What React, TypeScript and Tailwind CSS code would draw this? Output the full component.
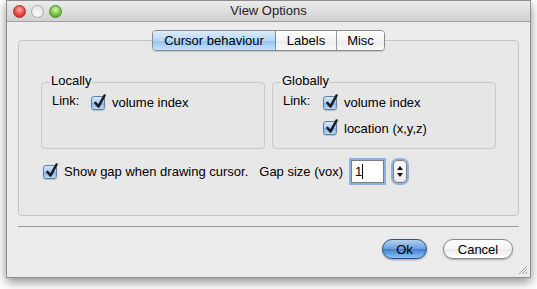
import React from 'react';

const Check: React.FC<{ label: string }> = ({ label }) => {
  return (
    <div className="flex items-center gap-[7px]">
      <div className="relative w-[14px] h-[14px] rounded-[3px] border border-[#5f7fa6] bg-[linear-gradient(#d3e6fa,#a9cbf0_50%,#7fb1e6_51%,#b8dafa)] shadow-[0_1px_1px_rgba(0,0,0,0.2)]">
        <svg className="absolute -top-[3px] left-[1px]" width="13" height="15" viewBox="0 0 13 15">
          <path d="M2.5 9 L5.5 12.5 L11.5 1.5" fill="none" stroke="#1c1c1c" strokeWidth="2.6" strokeLinecap="round" strokeLinejoin="round" />
        </svg>
      </div>
      <span>{label}</span>
    </div>
  );
};

const Group: React.FC<{ title: string; children: React.ReactNode }> = ({ title, children }) => {
  return (
    <div className="relative h-[67px] rounded-[4px] border border-[#c9c9c9] bg-[#e6e6e6] pl-[10px] pt-[10px]">
      <span className="absolute -top-[10px] left-[8px] px-[1px] bg-[#e8e8e8] leading-[16px]">{title}</span>
      {children}
    </div>
  );
};

const App: React.FC = () => {
  return (
    <div className="w-[537px] h-[289px] bg-white pl-[6px] font-['Liberation_Sans',Arial,sans-serif] text-[13px] text-black">
      <div className="relative w-[525px] h-[278px] flex flex-col border border-[#8d8d8d] bg-[#ececec] shadow-[0_4px_10px_rgba(0,0,0,0.45)]">
        {/* title bar */}
        <div className="relative h-[21px] flex items-center pl-[6px] gap-[5px] border-b border-[#a3a3a3] bg-[linear-gradient(#ececec,#d1d1d1)]">
          <div className="w-[13px] h-[13px] rounded-full border border-[#a8302a] bg-[radial-gradient(circle_at_50%_35%,#ffb3ad,#e8453c_55%,#b9221a)]" />
          <div className="w-[13px] h-[13px] rounded-full border border-[#a9a9a9] bg-[radial-gradient(circle_at_50%_70%,#fafafa,#e0e0e0)]" />
          <div className="w-[13px] h-[13px] rounded-full border border-[#4f8c2b] bg-[radial-gradient(circle_at_50%_35%,#d9f5b4,#78c43f_55%,#3f8a1c)]" />
          <div className="absolute inset-0 flex items-center justify-center text-[#222]">View Options</div>
        </div>

        <div className="flex flex-col px-[11px] pt-[8px]">
          {/* tabs */}
          <div className="relative z-10 flex justify-center">
            <div className="flex h-[21px] rounded-[4px] border border-[#8a8a8a] overflow-hidden shadow-[0_1px_1px_rgba(0,0,0,0.15)]">
              <div className="w-[123px] flex items-center justify-center bg-[linear-gradient(#dcecfc,#b5d6f6_50%,#8fc2f2_51%,#c6e3fd)] border-r border-[#6d8fb8]">
                Cursor behaviour
              </div>
              <div className="w-[61px] flex items-center justify-center bg-[linear-gradient(#ffffff,#f4f4f4_50%,#ececec_51%,#fafafa)] border-r border-[#9a9a9a]">
                Labels
              </div>
              <div className="w-[47px] flex items-center justify-center bg-[linear-gradient(#ffffff,#f4f4f4_50%,#ececec_51%,#fafafa)]">
                Misc
              </div>
            </div>
          </div>

          {/* tab box */}
          <div className="-mt-[11px] h-[176px] rounded-[4px] border border-[#c4c4c4] bg-[#e8e8e8] pt-[41px] px-[22px]">
            <div className="grid grid-cols-2 gap-[7px]">
              <Group title="Locally">
                <div className="flex">
                  <span className="w-[39px] leading-[16px]">Link:</span>
                  <Check label="volume index" />
                </div>
              </Group>
              <Group title="Globally">
                <div className="flex">
                  <span className="w-[40px] leading-[16px]">Link:</span>
                  <div className="flex flex-col gap-[6px]">
                    <Check label="volume index" />
                    <Check label="location (x,y,z)" />
                  </div>
                </div>
              </Group>
            </div>

            <div className="mt-[11px] ml-[2px] flex items-center h-[23px]">
              <Check label="Show gap when drawing cursor." />
              <span className="ml-[11px]">Gap size (vox)</span>
              <div className="ml-[8px] w-[33px] h-[23px] flex items-center border border-[#7e7e7e] bg-white pl-[3px] shadow-[0_0_0_2px_rgba(110,160,225,0.75)]">
                <span>1</span>
                <span className="w-px h-[15px] bg-black" />
              </div>
              <div className="ml-[9px] w-[14px] h-[23px] flex flex-col items-center justify-center gap-[3px] rounded-[5px] border border-[#7e7e7e] bg-[linear-gradient(#ffffff,#ebebeb)] shadow-[0_0_0_2px_rgba(110,160,225,0.75)]">
                <svg width="6" height="4" viewBox="0 0 6 4"><path d="M3 0 L6 4 L0 4 Z" fill="#111" /></svg>
                <svg width="6" height="4" viewBox="0 0 6 4"><path d="M0 0 L6 0 L3 4 Z" fill="#111" /></svg>
              </div>
            </div>
          </div>

          <div className="mt-[10px] h-px bg-[#9b9b9b]" />

          {/* buttons */}
          <div className="mt-[12px] flex justify-end gap-[16px] pr-[6px]">
            <button className="w-[45px] h-[20px] rounded-full border border-[#2c5189] bg-[linear-gradient(#b4d0f2,#6c9fdc_50%,#3f7fcf_51%,#8cc4f6)] shadow-[0_1px_2px_rgba(0,0,0,0.35)] leading-none">
              Ok
            </button>
            <button className="w-[70px] h-[20px] rounded-full border border-[#8a8a8a] bg-[linear-gradient(#ffffff,#f6f6f6_50%,#e9e9e9_51%,#ffffff)] shadow-[0_1px_2px_rgba(0,0,0,0.3)] leading-none">
              Cancel
            </button>
          </div>
        </div>

        {/* resize grip */}
        <svg className="absolute right-[2px] bottom-[2px]" width="11" height="11" viewBox="0 0 11 11">
          <path d="M10 2 L2 10 M10 5 L5 10 M10 8 L8 10" stroke="#9a9a9a" strokeWidth="1" />
        </svg>
      </div>
    </div>
  );
};

export default App;
